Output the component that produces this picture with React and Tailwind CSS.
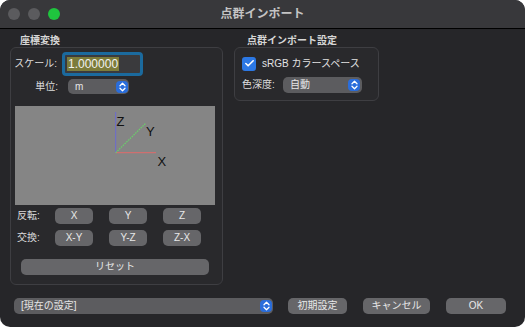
import { Check } from "lucide-react";

// ── small pieces ──────────────────────────────────────────────────────────────

function Stepper({ className = "" }) {
  return (
    <span
      className={`shrink-0 flex items-center justify-center rounded-[4px] bg-[#2a6ddb] ${className}`}
    >
      <svg width="7" height="10" viewBox="0 0 7 10" fill="none">
        <path d="M1 3.8 3.5 1.3 6 3.8" stroke="white" strokeWidth="1.3" strokeLinecap="round" strokeLinejoin="round" />
        <path d="M1 6.2 3.5 8.7 6 6.2" stroke="white" strokeWidth="1.3" strokeLinecap="round" strokeLinejoin="round" />
      </svg>
    </span>
  );
}

function PopUp({ label, className = "" }) {
  return (
    <div
      className={`flex items-center justify-between rounded-[5px] bg-[#5c5c5f] pl-[7px] pr-[1px] text-[10px] text-[#e6e6e6] ${className}`}
    >
      <span className="leading-none whitespace-nowrap">{label}</span>
      <Stepper className="w-[12px] h-[12px]" />
    </div>
  );
}

function Btn({ children, className = "" }) {
  return (
    <button
      className={`h-[16px] shrink-0 rounded-[5px] bg-[#666669] text-[10px] leading-none text-[#e8e8e8] whitespace-nowrap flex items-center justify-center ${className}`}
    >
      {children}
    </button>
  );
}

const label = "text-[10px] leading-[14px] text-[#dcdcdc] whitespace-nowrap shrink-0";

// ─────────────────────────────────────────────────────────────────────────────

export default function App() {
  return (
    <div className="w-[525px] h-[327px] bg-white font-['Liberation_Sans','Noto_Sans_CJK_JP',sans-serif]">
      <div className="w-full h-full rounded-[10px] overflow-hidden bg-[#262629] flex flex-col">
        {/* Title bar */}
        <header className="h-[29px] shrink-0 bg-[#38383b] border-b border-black grid grid-cols-[1fr_auto_1fr] items-center">
          <div className="flex items-center gap-[8px] pl-[8px]">
            <span className="w-[12px] h-[12px] rounded-full bg-[#5b5b5e]" />
            <span className="w-[12px] h-[12px] rounded-full bg-[#5b5b5e]" />
            <span className="w-[12px] h-[12px] rounded-full bg-[#1fc53e]" />
          </div>
          <h1 className="text-[12px] font-bold text-[#c4c4c4] leading-none">点群インポート</h1>
          <div />
        </header>

        <main className="flex-1 flex flex-col pl-[10px] pt-[5px]">
          <div className="flex items-start gap-[11px]">
            {/* 座標変換 */}
            <section className="w-[213px] flex flex-col">
              <h2 className="h-[13px] pl-[10px] text-[10px] leading-[13px] font-bold text-[#d6d6d6]">座標変換</h2>
              <div className="h-[238px] rounded-[6px] border border-[#3e3e42] bg-[#29292c] flex flex-col">
                <div className="flex items-center mt-[4px]">
                  <span className={`${label} w-[46px] text-right`}>スケール:</span>
                  <div className="ml-[5px] w-[81px] h-[24px] rounded-[4px] border-[3px] border-[#1b6a9e] bg-[#3a3a3d] flex items-center pl-[2px]">
                    <span className="bg-[#7c7c3a] text-[12px] leading-[14px] text-[#f2f2f2] px-[1px]">1.000000</span>
                  </div>
                </div>

                <div className="flex items-center mt-[3px]">
                  <span className={`${label} w-[47px] text-right`}>単位:</span>
                  <PopUp label="m" className="ml-[10px] w-[61px] h-[15px]" />
                </div>

                {/* axis preview */}
                <div className="ml-[4px] mt-[12px] w-[200px] h-[99px] bg-[#858585]">
                  <svg width="200" height="99" viewBox="0 0 200 99">
                    <line x1="100.7" y1="46.7" x2="100.7" y2="6" stroke="#6a6ad0" strokeWidth="1" />
                    <line x1="100.7" y1="46.7" x2="141" y2="46.7" stroke="#e06a6a" strokeWidth="1" />
                    <line x1="100.7" y1="46.7" x2="131" y2="17" stroke="#6ad06a" strokeWidth="1.2" strokeDasharray="1.5 1" />
                    <text x="101.5" y="20" fontSize="13" fill="#111" fontFamily="Liberation Sans, sans-serif">Z</text>
                    <text x="131" y="30" fontSize="13" fill="#111" fontFamily="Liberation Sans, sans-serif">Y</text>
                    <text x="142.5" y="60" fontSize="13" fill="#111" fontFamily="Liberation Sans, sans-serif">X</text>
                  </svg>
                </div>

                <div className="flex items-center mt-[3px]">
                  <span className={`${label} w-[44px] pl-[6px]`}>反転:</span>
                  <div className="flex gap-[16px]">
                    <Btn className="w-[38px]">X</Btn>
                    <Btn className="w-[38px]">Y</Btn>
                    <Btn className="w-[38px]">Z</Btn>
                  </div>
                </div>
                <div className="flex items-center mt-[6px]">
                  <span className={`${label} w-[44px] pl-[6px]`}>交換:</span>
                  <div className="flex gap-[16px]">
                    <Btn className="w-[38px]">X-Y</Btn>
                    <Btn className="w-[38px]">Y-Z</Btn>
                    <Btn className="w-[38px]">Z-X</Btn>
                  </div>
                </div>

                <Btn className="ml-[10px] mt-[13px] w-[188px]">リセット</Btn>
              </div>
            </section>

            {/* 点群インポート設定 */}
            <section className="w-[145px] flex flex-col">
              <h2 className="h-[13px] pl-[13px] text-[10px] leading-[13px] font-bold text-[#d6d6d6]">点群インポート設定</h2>
              <div className="h-[54px] rounded-[6px] border border-[#3e3e42] bg-[#29292c] flex flex-col">
                <div className="flex items-center mt-[8px] pl-[7px]">
                  <span className="w-[14px] h-[14px] rounded-[3px] bg-[#2c78e4] flex items-center justify-center">
                    <Check size={11} strokeWidth={3.5} color="white" />
                  </span>
                  <span className="ml-[6px] text-[10px] text-[#e2e2e2] whitespace-nowrap">sRGB カラースペース</span>
                </div>
                <div className="flex items-center mt-[6px] pl-[7px]">
                  <span className={`${label} w-[41px]`}>色深度:</span>
                  <PopUp label="自動" className="w-[79px] h-[16px] pr-[2px]" />
                </div>
              </div>
            </section>
          </div>

          {/* bottom bar */}
          <div className="flex items-center mt-[13px] pl-[4px]">
            <PopUp label="[現在の設定]" className="w-[259px] h-[16px]" />
            <Btn className="ml-[15px] w-[59px]">初期設定</Btn>
            <Btn className="ml-[16px] w-[67px]">キャンセル</Btn>
            <Btn className="ml-[16px] w-[60px]">OK</Btn>
          </div>
        </main>
      </div>
    </div>
  );
}
